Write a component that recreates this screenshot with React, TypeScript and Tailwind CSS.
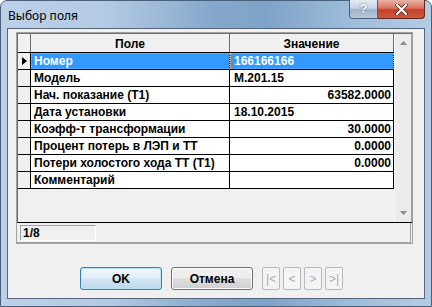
const rows = [
  { field: 'Номер', value: '166166166', right: false },
  { field: 'Модель', value: 'М.201.15', right: false },
  { field: 'Нач. показание (Т1)', value: '63582.0000', right: true },
  { field: 'Дата установки', value: '18.10.2015', right: false },
  { field: 'Коэфф-т трансформации', value: '30.0000', right: true },
  { field: 'Процент потерь в ЛЭП и ТТ', value: '0.0000', right: true },
  { field: 'Потери холостого хода ТТ (Т1)', value: '0.0000', right: true },
  { field: 'Комментарий', value: '', right: false },
];

function GridRow({ field, value, right, selected }: { field: string; value: string; right: boolean; selected: boolean }) {
  const cell = selected ? 'bg-[#3399ff] text-white' : 'bg-white text-black';
  return (
    <div className="flex h-[17px] border-b border-black">
      <div className="w-[13px] border-r border-black bg-[#f0f0f0] flex items-center justify-center">
        {selected && (
          <svg width="5" height="8" viewBox="0 0 5 8">
            <path d="M0 0 L5 4 L0 8 Z" fill="#000" />
          </svg>
        )}
      </div>
      <div className={`w-[199px] border-r border-black ${cell} flex items-center pl-[3px] whitespace-nowrap overflow-hidden ${selected ? 'outline outline-1 outline-dotted outline-[#f2a254] -outline-offset-1' : ''}`}>
        {field}
      </div>
      <div className={`w-[164px] border-r border-black ${cell} flex items-center ${right ? 'justify-end pr-[2px]' : 'pl-[4px]'} ${selected ? 'outline outline-1 outline-dotted outline-[#f2a254] -outline-offset-1' : ''}`}>
        {value}
      </div>
    </div>
  );
}

function NavButton({ label }: { label: string }) {
  return (
    <div className="w-[18px] h-[23px] rounded-[2px] border border-[#b5bac0] bg-[#f4f4f4] flex items-center justify-center text-[12px] font-normal text-[#a6adb5]">
      {label}
    </div>
  );
}

export default function App() {
  return (
    <div className="w-[432px] h-[307px] overflow-hidden font-['Liberation_Sans',Arial,sans-serif] text-[12px] font-bold">
      <div className="w-full h-full flex flex-col rounded-t-[7px] border border-[#4d6079] bg-[linear-gradient(90deg,#bcd1e8_0%,#b3cae3_25%,#84a7cb_50%,#7fa3c8_62%,#9fbddb_82%,#b4cbe3_100%)] px-[6px] pb-[7px]">
        <div className="h-[27px] flex justify-between">
          <div className="pt-[6px] pl-[1px] text-[12px] font-normal text-black font-['Noto_Sans',sans-serif]">Выбор поля</div>
          <div className="flex h-[19px] -mt-[1px]">
            <div className="w-[29px] h-full rounded-bl-[4px] border border-[#4f5f74] border-t-0 bg-[linear-gradient(180deg,#e3ebf4_0%,#c6d5e6_45%,#9fb5cd_55%,#b7c9dd_100%)] flex items-center justify-center text-white text-[13px] font-bold [text-shadow:0_0_2px_#3d4f66]">
              ?
            </div>
            <div className="w-[47px] h-full rounded-br-[4px] border border-[#5a2a22] border-t-0 border-l-0 bg-[linear-gradient(180deg,#eab3a6_0%,#d9745f_45%,#c2402a_55%,#d1583d_100%)] flex items-center justify-center">
              <svg width="13" height="11" viewBox="0 0 13 11">
                <path d="M2 1 L11 10 M11 1 L2 10" stroke="#4a1d14" strokeWidth="3.6" strokeLinecap="round" />
                <path d="M2 1 L11 10 M11 1 L2 10" stroke="#ffffff" strokeWidth="2.2" strokeLinecap="round" />
              </svg>
            </div>
          </div>
        </div>

        <div className="flex-1 border border-[#53667e] bg-[#f0f0f0] flex flex-col">
          <div className="mt-[3px] ml-[8px] w-[397px] h-[212px] border border-[#a0a0a0] flex flex-col">
            <div className="h-[190px] border-t border-l border-[#6d6d6d] border-b border-b-black flex">
              <div className="w-[377px] flex flex-col">
                <div className="flex h-[19px] border-b border-black bg-[#f0f0f0]">
                  <div className="w-[13px] border-r border-[#6d6d6d] bg-[#f0f0f0]" />
                  <div className="w-[199px] border-r border-[#6d6d6d] flex items-center justify-center pt-[1px]">Поле</div>
                  <div className="w-[164px] border-r border-[#6d6d6d] flex items-center justify-center pt-[1px]">Значение</div>
                </div>
                {rows.map((r, i) => (
                  <GridRow key={r.field} field={r.field} value={r.value} right={r.right} selected={i === 0} />
                ))}
              </div>
              <div className="w-[17px] bg-[#ececec] border-l border-[#f8f8f8] flex flex-col justify-between items-center py-[7px]">
                <svg width="7" height="4" viewBox="0 0 7 4">
                  <path d="M0 4 L3.5 0 L7 4 Z" fill="#8a8a8a" />
                </svg>
                <svg width="7" height="4" viewBox="0 0 7 4">
                  <path d="M0 0 L3.5 4 L7 0 Z" fill="#8a8a8a" />
                </svg>
              </div>
              <div className="w-[1px] bg-[#a0a0a0]" />
            </div>
            <div className="flex-1 border-r border-b border-[#a0a0a0] mr-[1px] flex items-start pt-[2px] pl-[3px]">
              <div className="w-[76px] h-[16px] border border-t-[#a0a0a0] border-l-[#a0a0a0] border-r-white border-b-white flex items-center pl-[2px]">
                1/8
              </div>
            </div>
          </div>

          <div className="mt-[23px] pl-[72px] flex items-center">
            <div className="w-[82px] h-[23px] rounded-[3px] border border-[#3c7fb1] bg-[linear-gradient(180deg,#eef6fb_0%,#e1eef7_48%,#cfe4f2_52%,#bcd9ec_100%)] shadow-[inset_0_0_0_1px_#b7e3f7] flex items-center justify-center text-black">
              OK
            </div>
            <div className="ml-[9px] w-[82px] h-[23px] rounded-[3px] border border-[#707070] bg-[linear-gradient(180deg,#f2f2f2_0%,#ebebeb_48%,#dddddd_52%,#cfcfcf_100%)] shadow-[inset_0_0_0_1px_#fcfcfc] flex items-center justify-center text-black">
              Отмена
            </div>
            <div className="ml-[9px] flex gap-[3px]">
              <NavButton label="|<" />
              <NavButton label="<" />
              <NavButton label=">" />
              <NavButton label=">|" />
            </div>
          </div>
        </div>
      </div>
    </div>
  );
}
